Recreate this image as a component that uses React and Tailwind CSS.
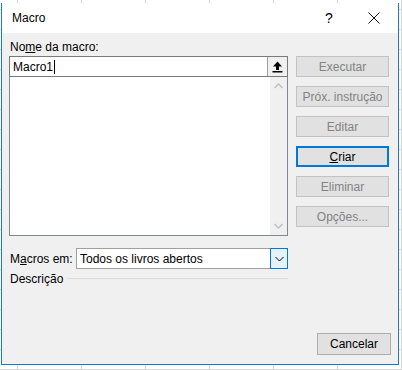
const font = { fontFamily: '"Liberation Sans", Arial, sans-serif' };

const SideButton = ({ children, active }) => (
  <div
    className={
      active
        ? "h-[21px] flex items-center justify-center bg-[#e1e1e1] border-2 border-[#0078d7] text-black"
        : "h-[21px] flex items-center justify-center bg-[#e1e1e1] border border-[#c2c2c2] text-[#838383]"
    }
  >
    {children}
  </div>
);

export default function App() {
  return (
    <div
      className="w-[402px] h-[370px] overflow-hidden bg-white bg-[linear-gradient(to_right,#d4d4d4_1px,transparent_1px),linear-gradient(to_bottom,#d4d4d4_1px,transparent_1px)] bg-[size:64px_20px] bg-[position:17px_9px] pt-[3px] pl-[1px]"
      style={font}
    >
      <div className="w-[398px] h-[362px] bg-[#f0f0f0] border border-[#1979ca] border-t-0 flex flex-col text-[12px] leading-[16px] text-black">
        {/* title bar */}
        <div className="h-[30px] bg-white flex items-center shrink-0">
          <div className="pl-[10px] flex-1">Macro</div>
          <div className="w-[40px] text-center text-[14px] mr-[2px]">?</div>
          <div className="w-[46px] flex items-center justify-center mr-[1px]">
            <svg width="12" height="12" viewBox="0 0 12 12">
              <path d="M0.5 0.5 L11.5 11.5 M11.5 0.5 L0.5 11.5" stroke="#111" strokeWidth="1" />
            </svg>
          </div>
        </div>

        {/* body */}
        <div className="flex flex-1">
          <div className="w-[279px] ml-[7px] flex flex-col pt-[6px]">
            <div className="h-[16px] pl-[1px]">
              No<span className="underline">m</span>e da macro:
            </div>
            <div className="mt-[1px] h-[21px] bg-white border border-[#7a7a7a] flex">
              <div className="flex-1 flex items-center pl-[3px]">
                Macro1<span className="inline-block w-px h-[14px] bg-black ml-px" />
              </div>
              <div className="w-[20px] border-l border-[#a0a0a0] bg-[#f0f0f0] flex items-center justify-center">
                <svg width="11" height="12" viewBox="0 0 11 12">
                  <path d="M5.5 0.5 L10 5.5 L7 5.5 L7 9 L4 9 L4 5.5 L1 5.5 Z" fill="#000" />
                  <rect x="0.5" y="10" width="10" height="1.5" fill="#000" />
                </svg>
              </div>
            </div>
            <div className="h-[159px] bg-white border border-t-0 border-[#828790] flex justify-end">
              <div className="w-[17px] bg-[#f0f0f0] flex flex-col items-center justify-between py-[6px]">
                <svg width="9" height="6" viewBox="0 0 9 6">
                  <path d="M0.5 5 L4.5 1 L8.5 5" fill="none" stroke="#c0c0c0" strokeWidth="1.5" />
                </svg>
                <svg width="9" height="6" viewBox="0 0 9 6">
                  <path d="M0.5 1 L4.5 5 L8.5 1" fill="none" stroke="#c0c0c0" strokeWidth="1.5" />
                </svg>
              </div>
            </div>

            <div className="mt-[12px] flex items-center">
              <div className="w-[67px] pl-[1px] whitespace-nowrap">
                M<span className="underline">a</span>cros em:
              </div>
              <div className="flex-1 h-[21px] bg-white border border-[#a0a0a0] flex">
                <div className="flex-1 flex items-center pl-[3px]">Todos os livros abertos</div>
                <div className="w-[18px] -my-px -mr-px bg-[#e5f1fb] border border-[#0078d7] flex items-center justify-center">
                  <svg width="9" height="6" viewBox="0 0 9 6">
                    <path d="M0.5 1 L4.5 5 L8.5 1" fill="none" stroke="#000" strokeWidth="1" />
                  </svg>
                </div>
              </div>
            </div>

            <div className="mt-[2px] flex items-center">
              <div className="pl-[1px]">Descrição</div>
              <div className="flex-1 h-px bg-[#dcdcdc] ml-[4px] mt-[-2px]" />
            </div>
          </div>

          <div className="flex-1 flex flex-col">
            <div className="w-[93px] ml-[8px] mt-[23px] flex flex-col gap-[9px]">
              <SideButton>Executar</SideButton>
              <SideButton>Próx. instrução</SideButton>
              <SideButton>Editar</SideButton>
              <SideButton active>
                <span>
                  <span className="underline">C</span>riar
                </span>
              </SideButton>
              <SideButton>Eliminar</SideButton>
              <SideButton>Opções...</SideButton>
            </div>
            <div className="mt-auto mb-[9px] flex justify-end pr-[7px]">
              <div className="w-[74px] h-[22px] flex items-center justify-center bg-[#e1e1e1] border border-[#adadad]">
                Cancelar
              </div>
            </div>
          </div>
        </div>
      </div>
    </div>
  );
}
